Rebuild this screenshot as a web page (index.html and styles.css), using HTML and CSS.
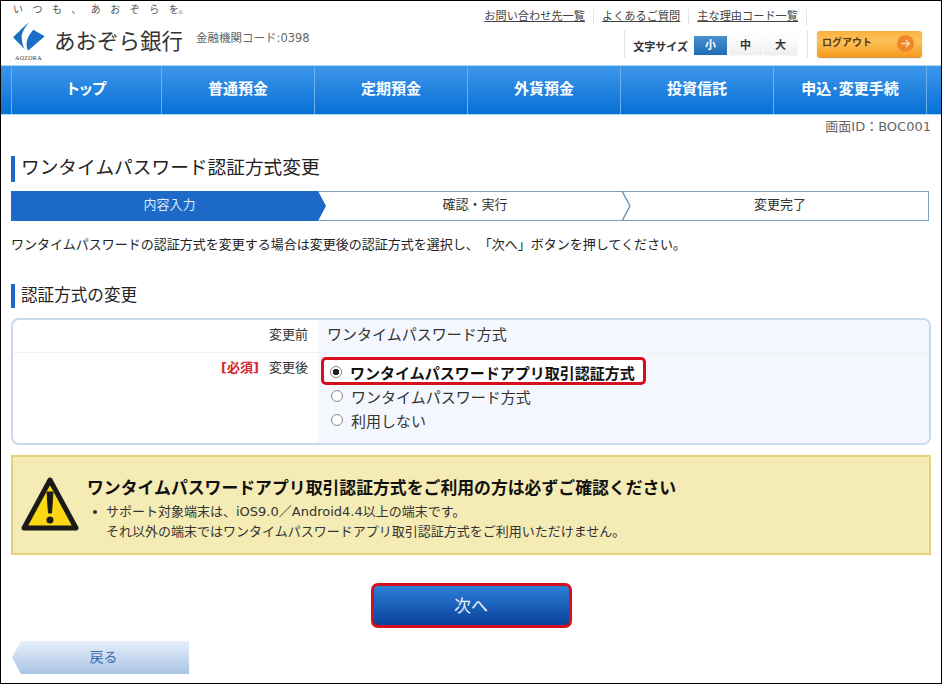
FILE: index.html
```html
<!DOCTYPE html>
<html lang="ja">
<head>
<meta charset="utf-8">
<title>ワンタイムパスワード認証方式変更</title>
<link rel="stylesheet" href="styles.css">
</head>
<body>
<div class="frame">
  <header class="head">
    <div class="brand">
      <div class="tagline">いつも、あおぞら<span class="tag-tight">を</span>。</div>
      <div class="brand-row">
        <div class="logo">
          <svg class="logo-mark" width="32" height="29" viewBox="15 19 96 87"><path d="M62 20 C50 38 42 50 41 62 C40.500 76 44 90 50 100 L15 65 Z" fill="#1a6fc4"/><path d="M110 62 L60 105 C54 92 54 78 60 66 C64 57 70 49 76 42 Z" fill="#1a6fc4"/></svg>
          <span class="logo-en">AOZORA</span>
        </div>
        <span class="bank-name">あおぞら銀行</span>
        <span class="bank-code">金融機関コード:0398</span>
      </div>
    </div>
    <div class="tools">
      <nav class="links">
        <a class="link">お問い合わせ先一覧</a>
        <a class="link">よくあるご質問</a>
        <a class="link">主な理由コード一覧</a>
      </nav>
      <div class="tool-row">
        <div class="sizes">
          <span class="size-label">文字サイズ</span>
          <span class="size size-on">小</span>
          <span class="size">中</span>
          <span class="size">大</span>
        </div>
        <button class="logout"><span class="logout-text">ログアウト</span><svg class="logout-icon" width="17" height="17" viewBox="0 0 24 24"><circle cx="12" cy="12" r="12" fill="#f0862a"/><path d="M6 12 H17 M12.500 7 L17.500 12 L12.500 17" fill="none" stroke="#fbd9a8" stroke-width="2"/></svg></button>
      </div>
    </div>
  </header>
  <nav class="gnav">
    <a class="gnav-item gnav-top">トップ</a>
    <a class="gnav-item">普通預金</a>
    <a class="gnav-item">定期預金</a>
    <a class="gnav-item">外貨預金</a>
    <a class="gnav-item">投資信託</a>
    <a class="gnav-item">申込･変更手続</a>
  </nav>
  <main class="main">
    <div class="screen-id">画面ID：BOC001</div>
    <h1 class="title">ワンタイムパスワード認証方式変更</h1>
    <ol class="steps">
      <li class="step step-on">内容入力<svg class="step-arrow" width="9" height="30" viewBox="0 0 9 30"><path d="M0 0 L8 15 L0 30 Z" fill="#1c69c8"/></svg></li>
      <li class="step">確認・実行<svg class="step-arrow" width="9" height="30" viewBox="0 0 9 30"><path d="M0 0 L8 15 L0 30" fill="#fff" stroke="#5f8fb8" stroke-width="1.300"/></svg></li>
      <li class="step">変更完了</li>
    </ol>
    <p class="intro">ワンタイムパスワードの認証方式を変更する場合は変更後の認証方式を選択し、「次へ」ボタンを押してください。</p>
    <h2 class="subtitle">認証方式の変更</h2>
    <div class="form">
      <div class="form-row form-row-first">
        <div class="form-label">変更前</div>
        <div class="form-value form-value-text">ワンタイムパスワード方式</div>
      </div>
      <div class="form-row">
        <div class="form-label"><span class="req">[必須]</span>変更後</div>
        <div class="form-value">
          <div class="radio-line radio-picked"><span class="radio radio-on"></span><b>ワンタイムパスワードアプリ取引認証方式</b></div>
          <div class="radio-line"><span class="radio"></span>ワンタイムパスワード方式</div>
          <div class="radio-line"><span class="radio"></span>利用しない</div>
        </div>
      </div>
    </div>
    <section class="warn">
      <svg class="warn-icon" width="58" height="56" viewBox="0 0 58 56"><path d="M29 4 L55 52 H3 Z" fill="#fcd713" stroke="#1a1a1a" stroke-width="5" stroke-linejoin="round"/><path d="M26 16 H32 L30.500 37 H27.500 Z" fill="#1a1a1a" stroke="#1a1a1a" stroke-linejoin="round"/><circle cx="29" cy="44" r="3.500" fill="#1a1a1a"/></svg>
      <div class="warn-body">
        <h3 class="warn-title">ワンタイムパスワードアプリ取引認証方式をご利用の方は必ずご確認ください</h3>
        <ul class="warn-list">
          <li>サポート対象端末は、iOS9.0／Android4.4以上の端末です。<br>それ以外の端末ではワンタイムパスワードアプリ取引認証方式をご利用いただけません。</li>
        </ul>
      </div>
    </section>
    <div class="next-row"><button class="next">次へ</button></div>
    <button class="back">戻る</button>
  </main>
</div>
</body>
</html>
```
FILE: styles.css
```css
* { box-sizing: border-box; }
html, body { margin: 0; padding: 0; }
body {
  font-family: "DejaVu Sans", "Noto Sans CJK JP", sans-serif;
  color: #222;
  background: #fff;
  text-spacing-trim: space-all;
}
.frame {
  width: 942px;
  height: 684px;
  border: 1px solid #000;
  overflow: hidden;
  display: flex;
  flex-direction: column;
}
.head {
  height: 64px;
  display: flex;
  justify-content: space-between;
}
.brand { padding: 3px 0 0 12px; }
.tagline {
  font-size: 10px;
  line-height: 11px;
  letter-spacing: 9.500px;
  color: #555;
  height: 14px;
  white-space: nowrap;
}
.tag-tight { letter-spacing: 0; }
.brand-row { display: flex; align-items: flex-start; }
.logo { width: 41px; display: flex; flex-direction: column; align-items: flex-start; }
.logo-mark { display: block; margin-top: 4px; }
.logo-en {
  font-family: "Liberation Serif", serif;
  font-size: 6px;
  line-height: 7px;
  letter-spacing: 0.300px;
  color: #333;
  margin: 4px 0 0 2px;
}
.bank-name {
  font-size: 21.500px;
  line-height: 30px;
  color: #333;
  margin-top: 9px;
  white-space: nowrap;
}
.bank-code {
  font-size: 11.500px;
  line-height: 14px;
  color: #666;
  margin: 13px 0 0 13px;
  white-space: nowrap;
}
.tools {
  padding: 8px 19px 0 0;
  display: flex;
  flex-direction: column;
  align-items: flex-end;
}
.links { display: flex; margin-right: 115px; height: 21px; align-items: flex-start; }
.link {
  font-size: 11.200px;
  line-height: 16px;
  color: #444;
  text-decoration: underline;
  padding-right: 8px;
  margin-right: 8px;
  border-right: 1px solid #e4e4e4;
  white-space: nowrap;
}
.link:last-child { margin-right: 0; }
.tool-row { display: flex; align-items: center; height: 27px; }
.sizes {
  display: flex;
  align-items: center;
  height: 26px;
  padding: 4px 10px 0 8px;
  border-left: 1px dotted #ccc;
  border-right: 1px dotted #ccc;
  margin-right: 9px;
}
.size-label { font-size: 11px; font-weight: 700; color: #333; margin-right: 6px; white-space: nowrap; }
.size {
  width: 33px;
  height: 19px;
  margin-right: 2px;
  font-size: 11px;
  line-height: 19px;
  text-align: center;
  font-weight: 700;
  color: #333;
  background: linear-gradient(#fff, #eee);
  box-shadow: 0 0 1px #ccc;
}
.size:last-child { margin-right: 0; }
.size-on { background: linear-gradient(#4a90d0, #1e6cb4); color: #fff; }
.logout {
  width: 105px;
  height: 26px;
  padding: 0 8px 0 5px;
  border: 0;
  border-radius: 3px;
  background: linear-gradient(#fbb040, #fdc25a 40%, #f59a1c);
  box-shadow: 0 1px 1px #c98a30;
  font-family: inherit;
  font-size: 10px;
  font-weight: 700;
  color: #5a3a10;
  display: flex;
  align-items: center;
  justify-content: space-between;
  letter-spacing: 0;
}
.logout-text { margin-bottom: 4px; }
.logout-icon { display: block; }
.gnav {
  height: 50px;
  display: grid;
  grid-template-columns: 150px repeat(4, 153px) 154px 1fr;
  border-top: 1px solid #a9dcf2;
  border-bottom: 1px solid #a9dcf2;
  background: linear-gradient(#3d97ea, #0870d6);
  padding-left: 10px;
}
.gnav-item {
  border-left: 1px solid #6fb0ec;
  color: #fff;
  font-size: 15px;
  font-weight: 700;
  line-height: 47px;
  text-align: center;
  white-space: nowrap;
}
.gnav-top { font-feature-settings: "palt"; }
.gnav-item:nth-child(6) { border-right: 1px solid #6fb0ec; }
.main { padding: 0 10px; flex: 1; }
.screen-id {
  text-align: right;
  font-size: 13px;
  line-height: 24px;
  color: #666;
}
.title {
  margin: 17px 0 9px;
  height: 26px;
  padding-left: 6px;
  border-left: 4px solid #1c69c8;
  font-size: 18.700px;
  line-height: 23px;
  font-weight: 400;
  color: #222;
  white-space: nowrap;
}
.steps {
  list-style: none;
  margin: 0;
  padding: 0;
  width: 918px;
  height: 30px;
  display: grid;
  grid-template-columns: 307px 304px 1fr;
  border: 1px solid #7ba2c4;
  border-left: 0;
}
.step {
  position: relative;
  padding-left: 10px;
  font-size: 13px;
  line-height: 25px;
  text-align: center;
  color: #333;
}
.step-on { background: #1c69c8; color: #dfeaf8; margin-top: -1px; margin-bottom: -1px; line-height: 27px; }
.step-arrow { position: absolute; left: 100%; top: -1px; z-index: 1; }
.step-on .step-arrow { top: 0; }
.intro {
  margin: 14px 0 0;
  font-size: 13px;
  line-height: 19px;
  color: #222;
  white-space: nowrap;
}
.subtitle {
  margin: 30px 0 10px;
  height: 24px;
  padding-left: 6px;
  border-left: 4px solid #1c69c8;
  font-size: 16.600px;
  line-height: 23px;
  font-weight: 400;
  white-space: nowrap;
}
.form {
  width: 920px;
  height: 127px;
  border: 2px solid #c9d9ea;
  border-radius: 8px;
  overflow: hidden;
  display: flex;
  flex-direction: column;
}
.form-row { display: flex; }
.form-row-first { height: 33px; border-bottom: 1px solid #eef2f7; }
.form-row:last-child { flex: 1; }
.form-label {
  width: 305px;
  padding: 6px 10px 0 0;
  text-align: right;
  font-size: 13px;
  line-height: 18px;
  color: #333;
}
.req { color: #d8242c; font-weight: 700; font-size: 13px; margin-right: 10px; }
.form-value {
  flex: 1;
  background: #f4f8fe;
  padding: 10px 0 0 13px;
  font-size: 15px;
}
.form-value-text { padding: 2px 0 0 9px; line-height: 26px; color: #333; }
.radio-line { display: flex; align-items: center; height: 24px; color: #333; white-space: nowrap; }
.radio-line b { color: #111; }
.radio {
  width: 12px;
  height: 12px;
  border: 1px solid #888;
  border-radius: 50%;
  background: #fff;
  margin-right: 8px;
  flex: none;
}
.radio-on { background: radial-gradient(circle, #222 0 3px, #fff 3.500px); }
.radio-picked {
  width: 325px;
  height: 28px;
  margin: -6px 0 -1px -10px;
  padding: 2px 0 0 6px;
  border: 3px solid #d5101c;
  border-radius: 5px;
  background: #fff;
}
.warn {
  width: 920px;
  height: 100px;
  margin-top: 10px;
  border: 2px solid #e3d27f;
  background: #f5ebb5;
  display: flex;
  padding: 20px 0 0 8px;
}
.warn-icon { flex: none; margin: -1px 8px 0 0; }
.warn-title { margin: 0; font-size: 16.850px; line-height: 23px; font-weight: 700; color: #111; white-space: nowrap; }
.warn-list { margin: 2px 0 0; padding: 0 0 0 19px; list-style: none; font-size: 13px; line-height: 20px; color: #333; white-space: nowrap; }
.warn-list li { position: relative; }
.warn-list li::before {
  content: "";
  position: absolute;
  left: -13px;
  top: 8px;
  width: 4px;
  height: 4px;
  border-radius: 50%;
  background: #333;
}
.next-row { display: flex; justify-content: center; margin-top: 28px; }
.next {
  width: 201px;
  height: 45px;
  border: 3px solid #d5101c;
  border-radius: 7px;
  background: linear-gradient(#2b7fd8, #0a419a);
  color: #e8f0fa;
  font-family: inherit;
  font-size: 17px;
  padding: 0 0 2px;
}
.back {
  display: block;
  width: 177px;
  height: 33px;
  margin-top: 13px;
  margin-left: 1px;
  padding: 0 0 3px 6px;
  border: 0;
  background: linear-gradient(#e6effa, #a9c4e4);
  clip-path: polygon(9px 0, 100% 0, 100% 100%, 9px 100%, 0 50%);
  color: #3c6cae;
  font-family: inherit;
  font-size: 14px;
}
```
